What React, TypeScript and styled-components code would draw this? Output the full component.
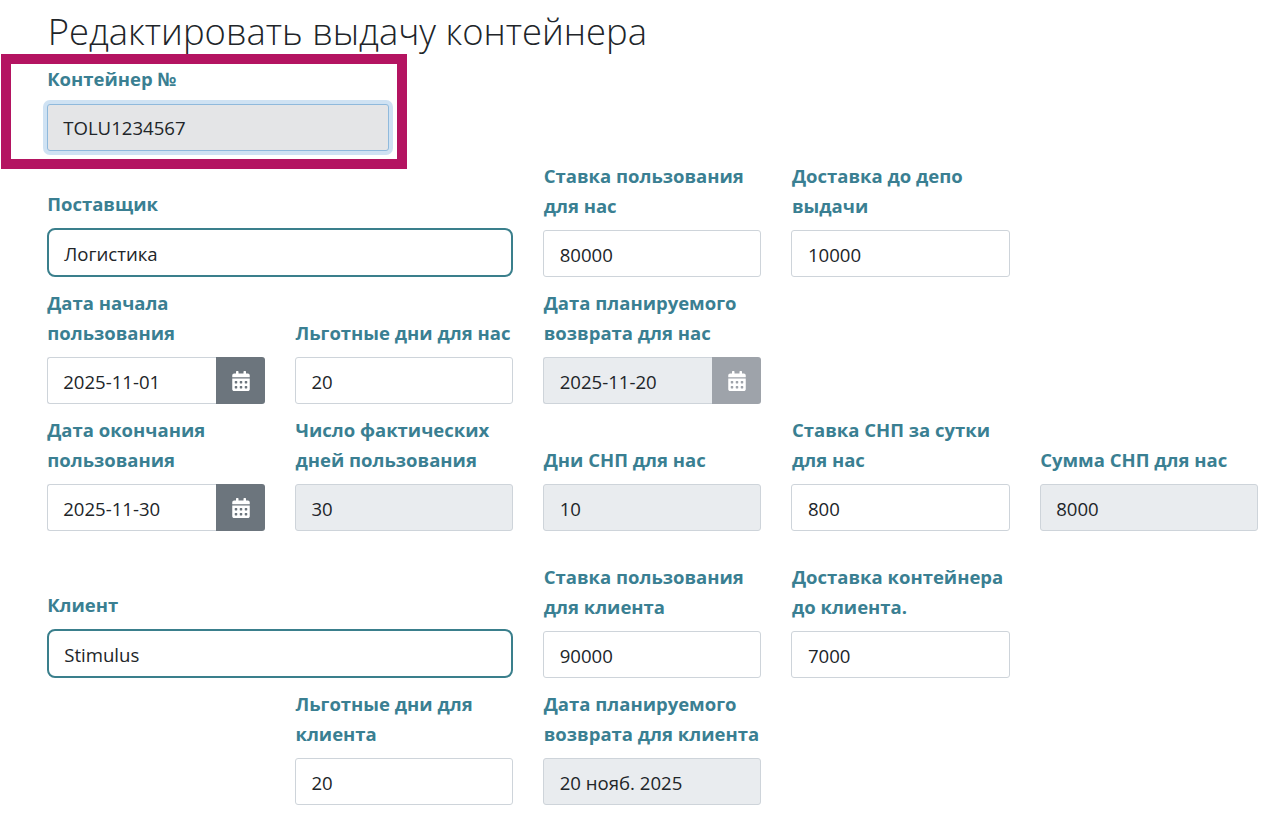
import React from 'react';
import styled, { createGlobalStyle } from 'styled-components';
import { FaCalendarAlt } from 'react-icons/fa';

const Global = createGlobalStyle`
  html, body { margin: 0; padding: 0; background: #fff; height: 816px; overflow: hidden; }
  body { font-family: "Open Sans", "Noto Sans", "Liberation Sans", sans-serif; color: #212529; }
`;

const Page = styled.div`
  position: relative;
  width: 1277px;
  height: 816px;
  overflow: hidden;
  padding: 8px 0 0 46.7px;
  box-sizing: border-box;
`;

const Title = styled.h2`
  margin: 0 0 8px;
  padding-left: 1px;
  height: 48px;
  font-size: 36.4px;
  line-height: 46px;
  font-weight: 300;
  color: #212529;
  white-space: nowrap;
`;

const Row = styled.div<{ $after?: number }>`
  display: grid;
  grid-template-columns: repeat(5, 218.25px);
  column-gap: 30px;
  align-items: end;
  margin-bottom: ${p => p.$after ?? 11}px;
`;

const Field = styled.div<{ $span?: number; $col?: number }>`
  grid-column: ${p => (p.$col ? `${p.$col} / span ${p.$span ?? 1}` : `span ${p.$span ?? 1}`)};
  min-width: 0;
`;

const ContainerField = styled(Field)`
  width: 342px;
`;

const Label = styled.label<{ $gap?: number }>`
  display: block;
  padding-left: 0.5px;
  font-size: 18.5px;
  line-height: 30px;
  font-weight: 700;
  color: #3a7f92;
  margin-bottom: ${p => p.$gap ?? 9}px;
`;

const Input = styled.div<{ $disabled?: boolean }>`
  height: 47px;
  box-sizing: border-box;
  padding: 2px 15px 0 15.5px;
  display: flex;
  align-items: center;
  flex: 1;
  min-width: 0;
  font-size: 18.6px;
  color: #212529;
  background: ${p => (p.$disabled ? '#e9ecef' : '#fff')};
  border: 1px solid #ced4da;
  border-radius: 3px;
`;

const FocusedInput = styled(Input)`
  padding-top: 0;
  background: #e4e5e7;
  border-color: #8fb9dc;
  box-shadow: 0 0 0 4px #cfe2f3;
`;

const TeamInput = styled(Input)`
  height: 49px;
  border: 2px solid #3a7f8c;
  border-radius: 8px;
`;

const DateGroup = styled.div`
  display: flex;
  height: 47px;
`;

const DateInput = styled(Input)`
  border-right: 0;
  border-radius: 3px 0 0 3px;
`;

const CalButton = styled.div<{ $disabled?: boolean }>`
  width: 49px;
  flex: none;
  box-sizing: border-box;
  padding-left: 1px;
  display: flex;
  align-items: center;
  justify-content: center;
  color: #fff;
  font-size: 20px;
  background: ${p => (p.$disabled ? '#9ea3aa' : '#6c757d')};
  border-radius: 0 3px 3px 0;
`;

const Highlight = styled.div`
  position: absolute;
  left: 1px;
  top: 54px;
  width: 406px;
  height: 115px;
  box-sizing: border-box;
  border: 10px solid #b41461;
  pointer-events: none;
`;

function F({ label, value, disabled, span, col }: { label: string; value: string; disabled?: boolean; span?: number; col?: number }) {
  return (
    <Field $span={span} $col={col}>
      <Label>{label}</Label>
      <Input $disabled={disabled}>{value}</Input>
    </Field>
  );
}

function D({ label, value, disabled }: { label: string; value: string; disabled?: boolean }) {
  return (
    <Field>
      <Label>{label}</Label>
      <DateGroup>
        <DateInput $disabled={disabled}>{value}</DateInput>
        <CalButton $disabled={disabled}><FaCalendarAlt /></CalButton>
      </DateGroup>
    </Field>
  );
}

function T({ label, value }: { label: string; value: string }) {
  return (
    <Field $span={2}>
      <Label>{label}</Label>
      <TeamInput>{value}</TeamInput>
    </Field>
  );
}

export default function App() {
  return (
    <Page>
      <Global />
      <Title>Редактировать выдачу контейнера</Title>
      <Row $after={10}>
        <ContainerField $span={2}>
          <Label $gap={10}>Контейнер №</Label>
          <FocusedInput>TOLU1234567</FocusedInput>
        </ContainerField>
      </Row>
      <Row>
        <T label="Поставщик" value="Логистика" />
        <F label="Ставка пользования для нас" value="80000" />
        <F label="Доставка до депо выдачи" value="10000" />
      </Row>
      <Row>
        <D label="Дата начала пользования" value="2025-11-01" />
        <F label="Льготные дни для нас" value="20" />
        <D label="Дата планируемого возврата для нас" value="2025-11-20" disabled />
      </Row>
      <Row $after={31}>
        <D label="Дата окончания пользования" value="2025-11-30" />
        <F label="Число фактических дней пользования" value="30" disabled />
        <F label="Дни СНП для нас" value="10" disabled />
        <F label="Ставка СНП за сутки для нас" value="800" />
        <F label="Сумма СНП для нас" value="8000" disabled />
      </Row>
      <Row>
        <T label="Клиент" value="Stimulus" />
        <F label="Ставка пользования для клиента" value="90000" />
        <F label="Доставка контейнера до клиента." value="7000" />
      </Row>
      <Row>
        <F col={2} label="Льготные дни для клиента" value="20" />
        <F label="Дата планируемого возврата для клиента" value="20 нояб. 2025" disabled />
      </Row>
      <Highlight />
    </Page>
  );
}
